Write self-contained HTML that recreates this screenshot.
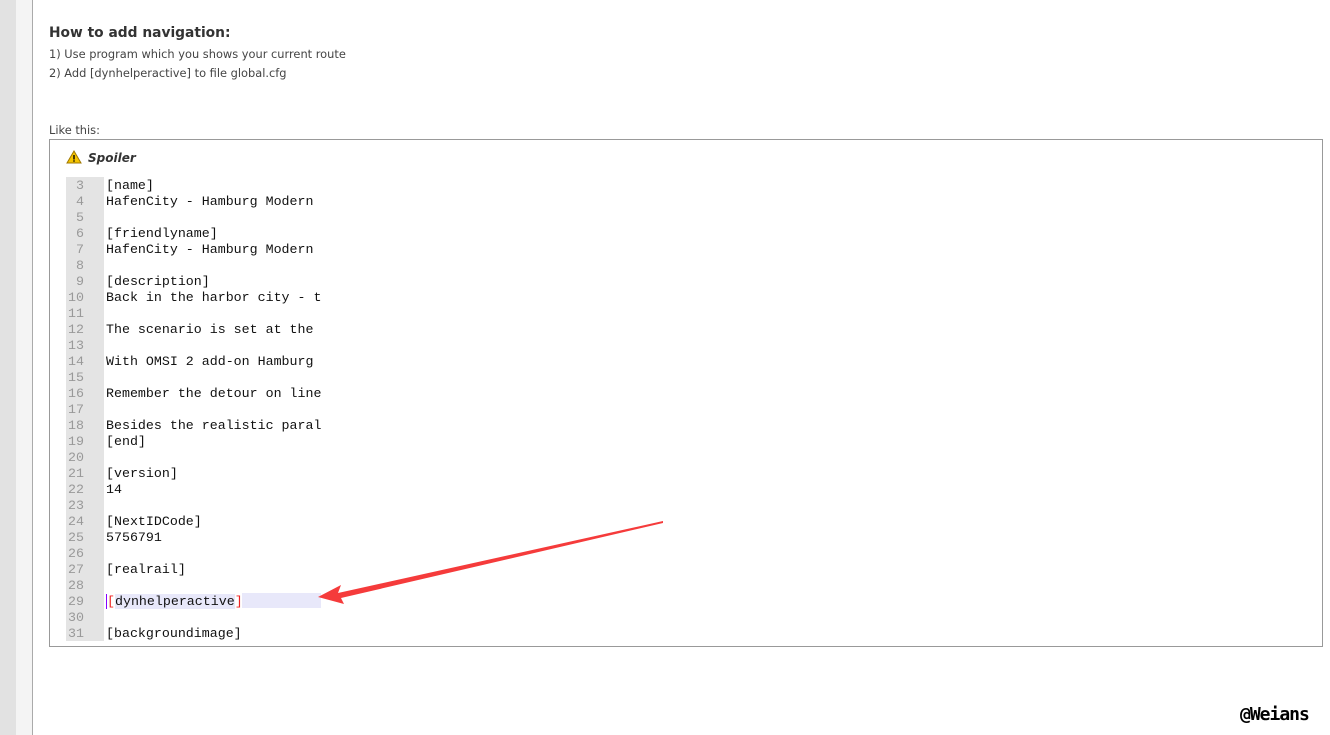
<!DOCTYPE html>
<html><head><meta charset="utf-8"><style>
body{margin:0;width:1330px;height:735px;background:#fff;position:relative;overflow:hidden;font-family:"DejaVu Sans","Liberation Sans",sans-serif;color:#333}
.s1{position:absolute;left:0;top:0;width:16px;height:735px;background:#e2e2e2}
.s2{position:absolute;left:16px;top:0;width:16px;height:735px;background:#f4f4f4;border-right:1px solid #aaa}
.t{position:absolute;left:49px;font-size:11.4px;color:#444;white-space:nowrap}
h3{position:absolute;left:49px;top:25px;margin:0;font-size:13.8px;font-weight:bold;color:#333}
.box{position:absolute;left:49px;top:139px;width:1272px;height:506px;border:1px solid #999}
.sp{position:absolute;left:66px;top:150px;font-size:12px;font-weight:bold;font-style:italic;color:#333}
.gut{position:absolute;left:66px;top:177px;width:38px;height:464px;background:#e4e4e4}
.code{position:absolute;left:66px;top:178px;font-family:"Liberation Mono",monospace;font-size:13.3px;line-height:16px;white-space:pre;color:#111}
.code div{height:16px}
.n{display:inline-block;width:18px;text-align:right;color:#999;margin-right:22px}
.hl{position:absolute;left:242px;top:593px;width:79px;height:15px;background:#e8e8fa}
.wm{position:absolute;left:1240px;top:704px;font-size:18px;font-weight:bold;color:#000;font-family:"DejaVu Sans Mono",monospace;letter-spacing:-1px}
</style></head><body>
<div class="s1"></div><div class="s2"></div>
<h3>How to add navigation:</h3>
<div class="t" style="top:47px">1) Use program which you shows your current route</div>
<div class="t" style="top:66px">2) Add [dynhelperactive] to file global.cfg</div>
<div class="t" style="top:123px">Like this:</div>
<div class="box"></div>
<div class="sp"><svg width="16" height="14" viewBox="0 0 16 14" style="vertical-align:-2px;margin-right:6px"><path d="M8 1L15 13H1Z" fill="#f5c400" stroke="#a07800" stroke-width="1"/><rect x="7.3" y="5" width="1.4" height="4.5" fill="#000"/><rect x="7.3" y="10.3" width="1.4" height="1.4" fill="#000"/></svg>Spoiler</div>
<div class="gut"></div>
<div class="hl"></div>
<div class="code"><div><span class="n">3</span>[name]</div><div><span class="n">4</span>HafenCity - Hamburg Modern</div><div><span class="n">5</span></div><div><span class="n">6</span>[friendlyname]</div><div><span class="n">7</span>HafenCity - Hamburg Modern</div><div><span class="n">8</span></div><div><span class="n">9</span>[description]</div><div><span class="n">10</span>Back in the harbor city - t</div><div><span class="n">11</span></div><div><span class="n">12</span>The scenario is set at the</div><div><span class="n">13</span></div><div><span class="n">14</span>With OMSI 2 add-on Hamburg</div><div><span class="n">15</span></div><div><span class="n">16</span>Remember the detour on line</div><div><span class="n">17</span></div><div><span class="n">18</span>Besides the realistic paral</div><div><span class="n">19</span>[end]</div><div><span class="n">20</span></div><div><span class="n">21</span>[version]</div><div><span class="n">22</span>14</div><div><span class="n">23</span></div><div><span class="n">24</span>[NextIDCode]</div><div><span class="n">25</span>5756791</div><div><span class="n">26</span></div><div><span class="n">27</span>[realrail]</div><div><span class="n">28</span></div><div><span class="n">29</span><span style="border-left:1px solid #80f;color:#e22">[</span><span style="background:#e8e8fa">dynhelperactive</span><span style="color:#e22">]</span></div><div><span class="n">30</span></div><div><span class="n">31</span>[backgroundimage]</div></div>
<svg style="position:absolute;left:0;top:0" width="1330" height="735"><polygon points="663,521 338,593 341,585 318,597 344,604 341,598 663,523" fill="#f53b3b"/></svg>
<div class="wm">@Weians</div>
</body></html>
